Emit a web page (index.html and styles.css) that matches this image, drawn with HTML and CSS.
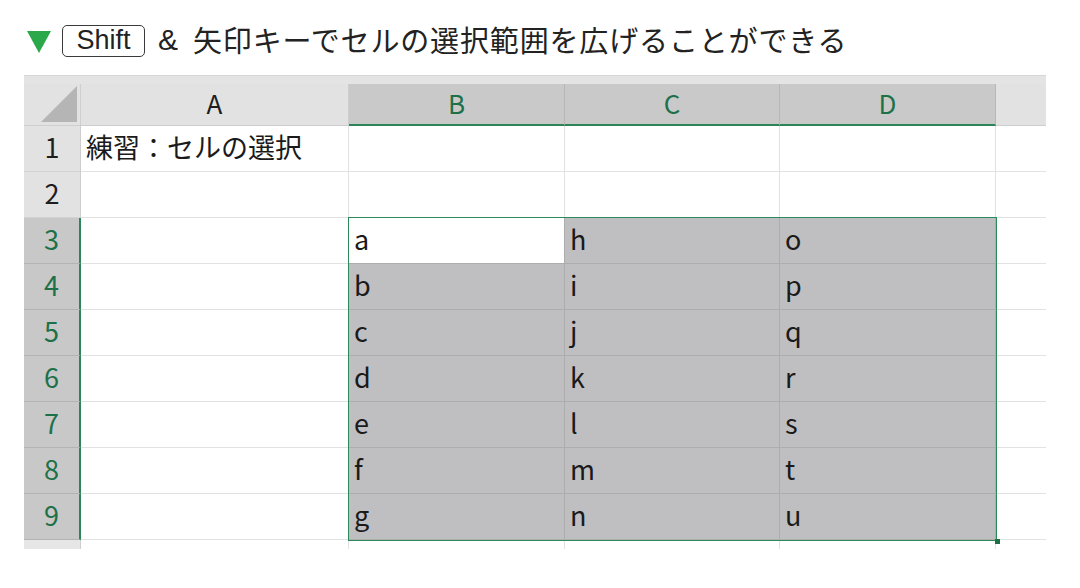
FILE: index.html
```html
<!DOCTYPE html>
<html lang="ja">
<head>
<meta charset="utf-8">
<link rel="stylesheet" href="styles.css">
</head>
<body>
<div class="title">
  <span class="tri"></span>
  <span class="key">Shift</span>
  <span class="amp">&amp;</span>
  <span class="title-text">矢印キーでセルの選択範囲を広げることができる</span>
</div>
<div class="sheet">
  <div class="band"></div>

  <div class="corner"><span class="corner-tri"></span></div>
  <div class="ch">A</div>
  <div class="ch sel">B</div>
  <div class="ch sel">C</div>
  <div class="ch sel">D</div>
  <div class="ch ext"></div>

  <div class="rh">1</div>
  <div class="c">練習：セルの選択</div>
  <div class="c"></div><div class="c"></div><div class="c"></div><div class="c ext"></div>

  <div class="rh">2</div>
  <div class="c"></div><div class="c"></div><div class="c"></div><div class="c"></div><div class="c ext"></div>

  <div class="rh sel">3</div>
  <div class="c"></div><div class="c active">a</div><div class="c s">h</div><div class="c s">o</div><div class="c ext"></div>

  <div class="rh sel">4</div>
  <div class="c"></div><div class="c s">b</div><div class="c s">i</div><div class="c s">p</div><div class="c ext"></div>

  <div class="rh sel">5</div>
  <div class="c"></div><div class="c s">c</div><div class="c s">j</div><div class="c s">q</div><div class="c ext"></div>

  <div class="rh sel">6</div>
  <div class="c"></div><div class="c s">d</div><div class="c s">k</div><div class="c s">r</div><div class="c ext"></div>

  <div class="rh sel">7</div>
  <div class="c"></div><div class="c s">e</div><div class="c s">l</div><div class="c s">s</div><div class="c ext"></div>

  <div class="rh sel">8</div>
  <div class="c"></div><div class="c s">f</div><div class="c s">m</div><div class="c s">t</div><div class="c ext"></div>

  <div class="rh sel">9</div>
  <div class="c"></div><div class="c s">g</div><div class="c s">n</div><div class="c s">u</div><div class="c ext"></div>

  <div class="rh stub"></div>
  <div class="c stubc"></div><div class="c stubc"></div><div class="c stubc"></div><div class="c stubc"></div><div class="c stubc ext"></div>

  <div class="selection"><span class="handle"></span></div>
</div>
</body>
</html>
```

FILE: styles.css
```css
html, body {
  margin: 0;
  padding: 0;
  background: #ffffff;
}
body {
  width: 1080px;
  height: 588px;
  overflow: hidden;
  font-family: "Noto Sans CJK JP", "Noto Sans", sans-serif;
  color: #1a1a1a;
}
.title {
  height: 75px;
  display: flex;
  align-items: center;
  padding-left: 27px;
  padding-top: 6px;
  box-sizing: border-box;
}
.tri {
  width: 0;
  height: 0;
  border-left: 12.5px solid transparent;
  border-right: 12.5px solid transparent;
  border-top: 22px solid #2aa84a;
  margin-right: 11px;
  margin-top: 2px;
}
.key {
  display: inline-flex;
  align-items: center;
  justify-content: center;
  width: 83px;
  height: 32px;
  box-sizing: border-box;
  border: 1.5px solid #3a3a3a;
  border-radius: 5px;
  font-family: "Liberation Sans", Arial, sans-serif;
  font-size: 27px;
  color: #222;
  margin-right: 13px;
}
.amp {
  font-family: "Liberation Sans", Arial, sans-serif;
  font-size: 30px;
  color: #222;
  margin-right: 15px;
  margin-bottom: 2px;
}
.title-text {
  font-size: 29px;
  letter-spacing: 0.85px;
  color: #222;
  margin-bottom: 4px;
}
.sheet {
  margin-left: 24px;
  width: 1022px;
  position: relative;
  display: grid;
  grid-template-columns: 57px 268px 216px 215px 216px 50px;
  grid-template-rows: 9px 42px repeat(9, 46px) 9px;
}
.band {
  grid-column: 1 / 7;
  background: #e4e4e4;
  border-top: 1px solid #d6d6d6;
}
.corner {
  background: #e2e2e2;
  border-right: 1px solid #cfcfcf;
  border-bottom: 1px solid #cfcfcf;
  position: relative;
}
.corner-tri {
  position: absolute;
  right: 3px;
  bottom: 3px;
  width: 0;
  height: 0;
  border-left: 36px solid transparent;
  border-bottom: 36px solid #b5b5b5;
}
.ch {
  background: #e2e2e2;
  border-right: 1px solid #cdcdcd;
  border-bottom: 1px solid #cdcdcd;
  display: flex;
  align-items: center;
  justify-content: center;
  padding-bottom: 4px;
  box-sizing: border-box;
  font-size: 26px;
  color: #1e1e1e;
}
.ch.sel {
  background: #c9c9ca;
  color: #1d7148;
  border-right: 1px solid #b7b7b7;
  border-bottom: 2px solid #2c8558;
}
.ch.ext {
  border-right: none;
}
.rh {
  background: #e2e2e2;
  border-right: 1px solid #cdcdcd;
  border-bottom: 1px solid #d2d2d2;
  display: flex;
  align-items: center;
  justify-content: center;
  padding-bottom: 5px;
  box-sizing: border-box;
  font-size: 27px;
  color: #1e1e1e;
}
.rh.sel {
  background: #c8c8c9;
  color: #1d7148;
  border-right: 2px solid #2c8558;
  border-bottom: 1px solid #b3b3b3;
}
.rh.stub {
  background: #e6e6e6;
  border-bottom: none;
}
.c {
  background: #ffffff;
  border-right: 1px solid #e2e2e2;
  border-bottom: 1px solid #e2e2e2;
  display: flex;
  align-items: center;
  padding-left: 5px;
  padding-bottom: 4px;
  font-size: 27px;
  color: #1a1a1a;
  box-sizing: border-box;
  white-space: nowrap;
}
.c.ext {
  border-right: none;
}
.c.s {
  background: #bfbfc1;
  border-right: 1px solid #adadad;
  border-bottom: 1px solid #adadad;
}
.c.active {
  background: #ffffff;
  border-right: 1px solid #adadad;
  border-bottom: 1px solid #adadad;
}
.c.stubc {
  border-bottom: none;
}
.selection {
  position: absolute;
  left: 324px;
  top: 142px;
  width: 649px;
  height: 324px;
  box-sizing: border-box;
  border: 1.5px solid #2a8a5a;
  pointer-events: none;
}
.handle {
  position: absolute;
  right: -4px;
  bottom: -4px;
  width: 5px;
  height: 5px;
  background: #1e7145;
}
```
